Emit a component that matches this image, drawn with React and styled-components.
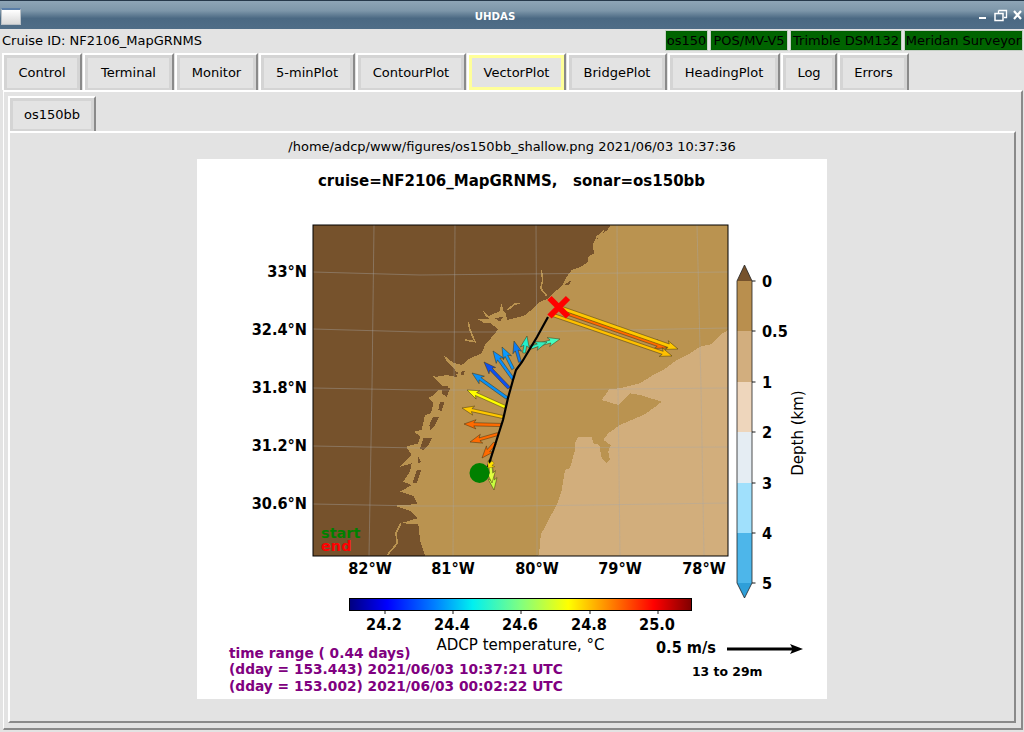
import React from "react";
import styled, { createGlobalStyle } from "styled-components";

const Global = createGlobalStyle`
  html, body { margin: 0; padding: 0; background: #e3e3e3; }
  * { box-sizing: border-box; }
`;

const Window = styled.div`
  width: 1024px; height: 732px; display: flex; flex-direction: column; overflow: hidden;
  background: #e3e3e3; color: #000;
  font: 13px "DejaVu Sans", sans-serif;
`;
const TitleBar = styled.div`
  height: 29px; flex: none; display: flex; align-items: center; padding: 0 0 0 1px;
  border-top: 1px solid #26384a;
  background: linear-gradient(#8ea5b6 0%, #7d96a9 35%, #4b6983 62%, #4f6d87 100%);
`;
const WinIcon = styled.div`
  width: 20px; height: 17px; margin-top: 2px; flex: none;
  border: 1px solid #b9c0c6; border-top: 2px solid #5a7ea8;
  background: linear-gradient(#ffffff, #d8d8d8);
`;
const Title = styled.div`
  flex: 1; text-align: center; color: #fff; font-size: 10.2px; font-weight: 700; padding: 2px 5px 0 0;
`;
const WinControls = styled.svg`
  width: 50px; height: 28px; flex: none; display: block;
`;
const InfoRow = styled.div`
  height: 24px; flex: none; display: flex; align-items: center; padding-left: 2px;
`;
const Cruise = styled.div`
  flex: 1; white-space: pre; padding-bottom: 2px;
`;
const Status = styled.div`
  height: 21px; margin-left: 2px; flex: none; width: ${p => p.$w}px; margin-bottom: 2px;
  display: flex; align-items: center; justify-content: center; white-space: pre;
  background: #006400; border: 1px solid #c4cfc4; outline: 1px solid #00440033; outline-offset: -2px;
  &:first-child { margin-left: 0; }
`;
const Statuses = styled.div`
  display: flex; margin-right: 1px;
`;
const TabBar = styled.div`
  height: 37px; flex: none; display: flex; align-items: stretch; padding-left: 2px; gap: 1px;
`;
const Tab = styled.div`
  width: ${p => p.$w}px; display: flex;
  border-top: 2px solid #fff; border-left: 2px solid #fff; border-right: 2px solid #8a8a8a;
`;
const TabFace = styled.div`
  flex: 1; display: flex; align-items: center; justify-content: center; white-space: pre; padding-bottom: 1px;
  border: 3px solid ${p => (p.$active ? "#ffff99" : "#d4d4d4")};
  border-bottom-width: ${p => (p.$active ? 3 : 2)}px;
`;
const Notebook = styled.div`
  flex: 1; min-height: 0; margin: 0 1px 2px 3px; padding: 4px 5px 5px 4px; display: flex; flex-direction: column;
  border-top: 2px solid #fff; border-left: 1px solid #fff;
  border-right: 2px solid #8a8a8a; border-bottom: 2px solid #8a8a8a;
`;
const InnerTabs = styled.div`
  height: 35px; flex: none; display: flex; align-items: stretch;
`;
const InnerBody = styled.div`
  flex: 1; min-height: 0; display: flex; flex-direction: column; align-items: center;
  border-top: 2px solid #fff; border-left: 2px solid #fff;
  border-right: 2px solid #8a8a8a; border-bottom: 2px solid #8a8a8a;
`;
const Caption = styled.div`
  height: 26px; flex: none; display: flex; align-items: center; white-space: pre; padding-top: 1px;
`;
const Figure = styled.svg`
  display: block; width: 630px; height: 540px; flex: none; background: #fff; margin-left: -1px;
`;
const PlotText = styled.text`
  font-family: "DejaVu Sans", sans-serif;
  font-weight: ${p => (p.$regular ? 400 : 700)};
  font-size: ${p => p.$size || 14.5}px;
  fill: ${p => p.$color || "#000"};
  text-anchor: ${p => p.$anchor || "start"};
  white-space: pre;
`;

// A tick label as matplotlib hints it: taller than its width would suggest.
const Tall = ({ x, y, children, ...rest }) => (
  <PlotText transform={`translate(${x} ${y}) scale(0.91 1)`} $size="16" {...rest}>{children}</PlotText>
);

const z = (ox, oy, pts) => pts.map(([x, y]) => `${(ox + x / 3).toFixed(1)},${(oy + y / 3).toFixed(1)}`).join(" ");
const z1 = pts => z(420, 290, pts);
const z2 = pts => z(395, 385, pts);
const z3 = pts => z(310, 220, pts);
const z4 = pts => z(520, 220, pts);
const z5 = pts => z(310, 390, pts);
const z6 = pts => z(520, 380, pts);

const DARK = "#76522c", MID = "#ba9350", LIGHT = "#d2ae7c";

const coast = [
  "313,225",
  z4([[272, 15], [262, 30], [240, 45], [230, 60], [218, 75], [222, 100], [205, 110], [205, 125], [180, 142], [155, 150], [140, 170], [128, 195], [105, 215], [80, 238], [60, 245], [40, 265], [15, 285], [0, 290]]),
  z1([[262, 90], [256, 68], [250, 62], [245, 40], [238, 65], [225, 70], [205, 78], [188, 60], [197, 78], [212, 88], [172, 88], [195, 100], [212, 100], [235, 118], [225, 130], [195, 165], [185, 190], [150, 205], [125, 225], [100, 218], [70, 195], [78, 210], [105, 238], [112, 262], [82, 255], [50, 260], [36, 258], [65, 285], [75, 300]]),
  z2([[130, 15], [115, 30], [100, 40], [115, 55], [108, 85], [90, 90], [80, 135], [58, 140], [75, 155], [70, 175], [33, 185], [50, 210], [15, 245], [50, 235], [45, 260], [25, 290], [50, 300]]),
  z5([[270, 305], [310, 318], [322, 342], [255, 347], [300, 362], [322, 385], [272, 400], [325, 402], [330, 450], [345, 497]]),
  "313,556",
].join(" ");

const darkIslands = [
  z1([[225, 85], [250, 80], [240, 95]]),
  z1([[122, 245], [134, 243], [132, 254], [122, 254]]),
  z1([[108, 245], [116, 248], [110, 256]]),
  z1([[60, 290], [85, 288], [80, 298], [62, 298]]),
  z4([[135, 192], [152, 182], [150, 192], [138, 197]]),
  z2([[145, 5], [165, 10], [155, 35], [140, 25]]),
  z2([[135, 50], [148, 52], [140, 78], [130, 75]]),
  z2([[115, 95], [133, 95], [120, 120], [105, 135], [103, 120]]),
  z2([[85, 160], [110, 160], [100, 180], [85, 195], [75, 190]]),
  z2([[70, 215], [78, 230], [68, 237]]),
  z2([[65, 255], [78, 255], [65, 295], [52, 295]]),
];

const midStrips = [
  z4([[64, 150], [68, 180], [62, 205], [80, 228]]),
  z4([[252, 32], [232, 50], [222, 72]]),
  z1([[145, 95], [150, 120], [165, 155], [135, 150]]),
  z1([[262, 60], [285, 42], [300, 40]]),
  z5([[272, 400], [258, 430], [262, 460], [232, 495]]),
];

const lightArea = [
  "728,330",
  z4([[600, 345], [575, 372], [540, 380], [510, 400], [470, 420], [430, 450], [400, 465], [360, 490], [300, 505], [265, 507]]),
  z6([[270, 25], [245, 60], [295, 75], [330, 40], [360, 45], [425, 65], [400, 85], [370, 105], [300, 135], [265, 160], [250, 180], [272, 195], [265, 215], [270, 240], [260, 250], [245, 235], [238, 195], [220, 190], [215, 170], [175, 170], [165, 190], [165, 210], [150, 265], [135, 270], [125, 330], [110, 375], [80, 430], [62, 465], [60, 500], [55, 528]]),
  "728,556",
].join(" ");

const gridLines = [
  "374,225 372,387 369,556", "455,225 454,387 453,556", "536,225 537,387 537,556",
  "617,225 618,387 620,556", "697,225 701,387 704,556",
  "313,272 420,275 520,274 728,272", "313,329 420,332 520,332 728,328",
  "313,388 420,390 520,390 728,388", "313,446 420,448 520,448 728,447", "313,504 420,506 520,506 728,503",
];

const arrows = [
  [563, 312, 667, 348, "#ff6a00", 1.6],
  [553, 315, 672, 356, "#ffc000", 1.6],
  [561, 308, 678, 349, "#ffc800", 1.8],
  [524, 353, 527, 336, "#22eecc", 1.4],
  [530, 347, 560, 339, "#44ffc0", 1.5],
  [530, 348, 547, 342, "#33eec0", 1.4],
  [520, 362, 514, 341, "#0a7cf5", 1.5],
  [513, 369, 502, 347, "#0a9aff", 1.5],
  [513, 379, 493, 351, "#0a90ff", 1.5],
  [509, 388, 484, 362, "#0d50f0", 1.6],
  [507, 398, 472, 373, "#0a90f5", 1.5],
  [505, 407, 467, 390, "#ffff00", 1.5],
  [503, 417, 462, 408, "#ffc800", 1.5],
  [501, 425, 464, 424, "#ff6a00", 1.6],
  [498, 434, 470, 442, "#ff6a00", 1.5],
  [495, 443, 482, 458, "#ff6a00", 1.6],
  [490, 460, 494, 490, "#c8ff40", 1.6],
  [490, 461, 492, 483, "#e0ff40", 1.6],
];

const arrowPoints = (x0, y0, x1, y1, w) => {
  const dx = x1 - x0, dy = y1 - y0, len = Math.hypot(dx, dy);
  const ux = dx / len, uy = dy / len, nx = -uy, ny = ux;
  const hl = Math.min(12, len * 0.7), hw = 4.6, neck = hl * 0.82;
  const p = (a, b) => `${(x0 + ux * a + nx * b).toFixed(1)},${(y0 + uy * a + ny * b).toFixed(1)}`;
  return [p(0, w), p(len - neck, w), p(len - hl, hw), p(len, 0), p(len - hl, -hw), p(len - neck, -w), p(0, -w)].join(" ");
};

const jet = [
  [0, "#00007f"], [0.11, "#0000ff"], [0.25, "#0080ff"], [0.36, "#00f0f0"], [0.5, "#80ff80"],
  [0.64, "#ffff00"], [0.75, "#ff9000"], [0.89, "#ff0000"], [1, "#7f0000"],
];

const depthBands = [
  [281, 331, "#b98f4e"], [331, 382, "#d2ae7e"], [382, 432, "#eed6bc"],
  [432, 483, "#e5edf3"], [483, 533, "#a0e0fc"], [533, 583, "#4db6ea"],
];
const depthTicks = [[281, "0"], [331, "0.5"], [382, "1"], [432, "2"], [483, "3"], [533, "4"], [583, "5"]];
const latLabels = [[276.5, "33°N"], [334.5, "32.4°N"], [392.5, "31.8°N"], [450.5, "31.2°N"], [508.5, "30.6°N"]];
const lonLabels = [[370, "82°W"], [453, "81°W"], [537, "80°W"], [620, "79°W"], [704, "78°W"]];
const tempTicks = [[385, "24.2"], [453, "24.4"], [521, "24.6"], [590, "24.8"], [658, "25.0"]];

const tabs = [
  ["Control", 80], ["Terminal", 91], ["Monitor", 83], ["5-minPlot", 96], ["ContourPlot", 110],
  ["VectorPlot", 99, true], ["BridgePlot", 100], ["HeadingPlot", 112], ["Log", 56], ["Errors", 71],
];
const statuses = [["os150", 43], ["POS/MV-V5", 78], ["Trimble DSM132", 112], ["Meridan Surveyor", 119]];

const Plot = () => (
  <Figure viewBox="197 159 630 540">
    <defs>
      <linearGradient id="jet" x1="0" x2="1" y1="0" y2="0">
        {jet.map(([o, c]) => <stop key={o} offset={o} stopColor={c} />)}
      </linearGradient>
    </defs>
    <PlotText x="511.5" y="185.5" $anchor="middle" $size="15">{"cruise=NF2106_MapGRNMS,   sonar=os150bb"}</PlotText>

    <rect x="313" y="225" width="415" height="331" fill={MID} />
    <g shapeRendering="crispEdges">
      <polygon points={lightArea} fill={LIGHT} />
      <polygon points={z6([[238, 92], [250, 83], [256, 95], [245, 102]])} fill={MID} />
      <polygon points={coast} fill={DARK} />
      {darkIslands.map(p => <polygon key={p} points={p} fill={DARK} />)}
      {midStrips.map(p => <polyline key={p} points={p} fill="none" stroke={MID} strokeWidth="1.6" />)}
    </g>
    {gridLines.map(p => <polyline key={p} points={p} fill="none" stroke="#a8a8a8" strokeOpacity="0.4" strokeWidth="1" />)}

    {arrows.map(([a, b, c, d, color, w]) => (
      <polygon key={`${a}${b}${c}${d}`} points={arrowPoints(a, b, c, d, w)} fill={color} stroke="#40300f" strokeOpacity="0.7" strokeWidth="0.7" />
    ))}
    <polyline points="488,467 503,420 508,398 513,380 516,370 522,362 537,337 548,317" fill="none" stroke="#000" strokeWidth="2.2" />
    <polygon points={arrowPoints(493, 462, 488, 468, 1.6)} fill="#ffe000" stroke="#40300f" strokeOpacity="0.6" strokeWidth="0.5" />
    <circle cx="479.5" cy="473" r="10" fill="#008000" />
    <path d="M549.5 298 L568 316.5 M568 298 L549.5 316.5" stroke="#ff0000" strokeWidth="6" fill="none" />
    <rect x="313" y="225" width="415" height="331" fill="none" stroke="#000" strokeWidth="1" />

    <PlotText x="321" y="538" $color="#008000" $size="14.5">start</PlotText>
    <PlotText x="321" y="551" $color="#ff0000" $size="14.5">end</PlotText>

    {latLabels.map(([y, t]) => <Tall key={t} x={307} y={y} $anchor="end">{t}</Tall>)}
    {lonLabels.map(([x, t]) => <Tall key={t} x={x} y={573.5} $anchor="middle">{t}</Tall>)}

    <g>
      <polygon points="737,281 744.5,265 752,281" fill={DARK} />
      <polygon points="737,583 744.5,598 752,583" fill="#2f9fd9" />
      {depthBands.map(([a, b, c]) => <rect key={a} x="737" y={a} width="15" height={b - a} fill={c} />)}
      <polygon points="737,281 744.5,265 752,281 752,583 744.5,598 737,583" fill="none" stroke="#222" strokeWidth="0.8" />
      {depthTicks.map(([y, t]) => (
        <g key={t}>
          <line x1="752" x2="755.5" y1={y} y2={y} stroke="#000" strokeWidth="0.9" />
          <Tall x={762} y={y + 6}>{t}</Tall>
        </g>
      ))}
      <PlotText transform="translate(803 433) rotate(-90)" $regular $anchor="middle" $size="15">Depth (km)</PlotText>
    </g>

    <rect x="349.5" y="598.5" width="342" height="12" fill="url(#jet)" stroke="#000" strokeWidth="1" />
    {tempTicks.map(([x, t]) => (
      <g key={t}>
        <line x1={x} x2={x} y1="611" y2="614" stroke="#000" strokeWidth="0.9" />
        <Tall x={x - 1} y={630} $anchor="middle">{t}</Tall>
      </g>
    ))}
    <PlotText x="520.5" y="649.5" $regular $anchor="middle" $size="15">ADCP temperature, °C</PlotText>

    <PlotText x="229" y="658" $color="#800080" $size="13.75">time range ( 0.44 days)</PlotText>
    <PlotText x="229" y="674" $color="#800080" $size="13.75">(dday = 153.443) 2021/06/03 10:37:21 UTC</PlotText>
    <PlotText x="229" y="691" $color="#800080" $size="13.75">(dday = 153.002) 2021/06/03 00:02:22 UTC</PlotText>

    <Tall x={656} y={653}>0.5 m/s</Tall>
    <polygon points="727,647.5 792,647.5 790,644 803,649 790,654 792,650.5 727,650.5" fill="#000" />
    <PlotText x="692" y="676" $size="12.4">13 to 29m</PlotText>
  </Figure>
);

export default function App() {
  return (
    <Window>
      <Global />
      <TitleBar>
        <WinIcon />
        <Title>UHDAS</Title>
        <WinControls viewBox="0 0 50 28">
          <rect x="5" y="16" width="7" height="2" fill="#fff" />
          <path d="M24.5 9.5 H32.5 V16.5 H30 M24.5 9.5 V12" fill="none" stroke="#fff" strokeWidth="1.3" />
          <rect x="21" y="12.5" width="8" height="7" fill="none" stroke="#fff" strokeWidth="1.5" />
          <path d="M40 10 L47 18 M47 10 L40 18" stroke="#fff" strokeWidth="2.2" fill="none" />
        </WinControls>
      </TitleBar>
      <InfoRow>
        <Cruise>Cruise ID: NF2106_MapGRNMS</Cruise>
        <Statuses>
          {statuses.map(([t, w]) => <Status key={t} $w={w}>{t}</Status>)}
        </Statuses>
      </InfoRow>
      <TabBar>
        {tabs.map(([t, w, active]) => (
          <Tab key={t} $w={w}><TabFace $active={active}>{t}</TabFace></Tab>
        ))}
      </TabBar>
      <Notebook>
        <InnerTabs>
          <Tab $w={88}><TabFace>os150bb</TabFace></Tab>
        </InnerTabs>
        <InnerBody>
          <Caption>/home/adcp/www/figures/os150bb_shallow.png 2021/06/03 10:37:36</Caption>
          <Plot />
        </InnerBody>
      </Notebook>
    </Window>
  );
}
